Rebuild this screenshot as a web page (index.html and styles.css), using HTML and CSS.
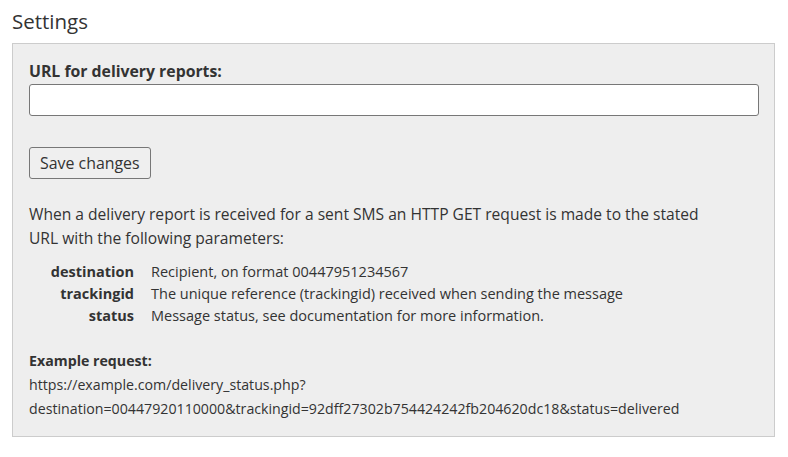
FILE: index.html
```html
<!DOCTYPE html>
<html lang="en">
<head>
  <meta charset="UTF-8">
  <title>Settings</title>
  <link rel="stylesheet" href="styles.css">
</head>
<body>

  <h2>Settings</h2>

  <div class="settings-box">
    <label for="reportUrl">URL for delivery reports:</label>
    <input type="text" id="reportUrl" />

    <button type="button">Save changes</button>

    <p class="intro">When a delivery report is received for a sent SMS an HTTP GET request is made to the stated URL with the following parameters:</p>

    <table class="params">
      <tr>
        <th>destination</th>
        <td>Recipient, on format 00447951234567</td>
      </tr>
      <tr>
        <th>trackingid</th>
        <td>The unique reference (trackingid) received when sending the message</td>
      </tr>
      <tr>
        <th>status</th>
        <td>Message status, see documentation for more information.</td>
      </tr>
    </table>

    <div class="example">
      <strong>Example request:</strong><br/>
      https://example.com/delivery_status.php?<br/>
      destination=00447920110000&amp;trackingid=92dff27302b754424242fb204620dc18&amp;status=delivered
    </div>
  </div>

</body>
</html>
```

FILE: styles.css
```css
body {
  font-family: 'Open Sans', sans-serif;
  font-size: 14px;
  color: #333;
  margin: 0;
  padding: 8px 12px;
  background: #fff;
}
h2 {
  font-size: 20.5px;
  font-weight: normal;
  margin: 0 0 9px 0;
  line-height: 26px;
}
.settings-box {
  width: 730px;
  background: #eee;
  border: 1px solid #ccc;
  padding: 16px 15px 15px 16px;
}
label {
  display: block;
  font-size: 15.8px;
  font-weight: bold;
  line-height: 22px;
}
input {
  display: block;
  width: 100%;
  box-sizing: border-box;
  height: 32px;
  margin-top: 2px;
  border: 1px solid #777;
  border-radius: 3px;
  background: #fff;
}
button {
  display: block;
  margin-top: 31px;
  height: 32px;
  padding: 0 10px;
  font-family: inherit;
  font-size: 15.9px;
  color: #333;
  background: #efefef;
  border: 1px solid #777;
  border-radius: 3px;
}
.intro {
  max-width: 700px;
  font-size: 15.6px;
  margin: 23px 0 11px 0;
  line-height: 24px;
}
.params {
  border-collapse: collapse;
  font-size: 14.5px;
}
.params th {
  width: 105px;
  text-align: right;
  padding: 0 17px 0 0;
  line-height: 22px;
}
.params td {
  padding: 0;
  line-height: 22px;
}
.example {
  font-size: 14.2px;
  margin-top: 22px;
  line-height: 24px;
}
```
